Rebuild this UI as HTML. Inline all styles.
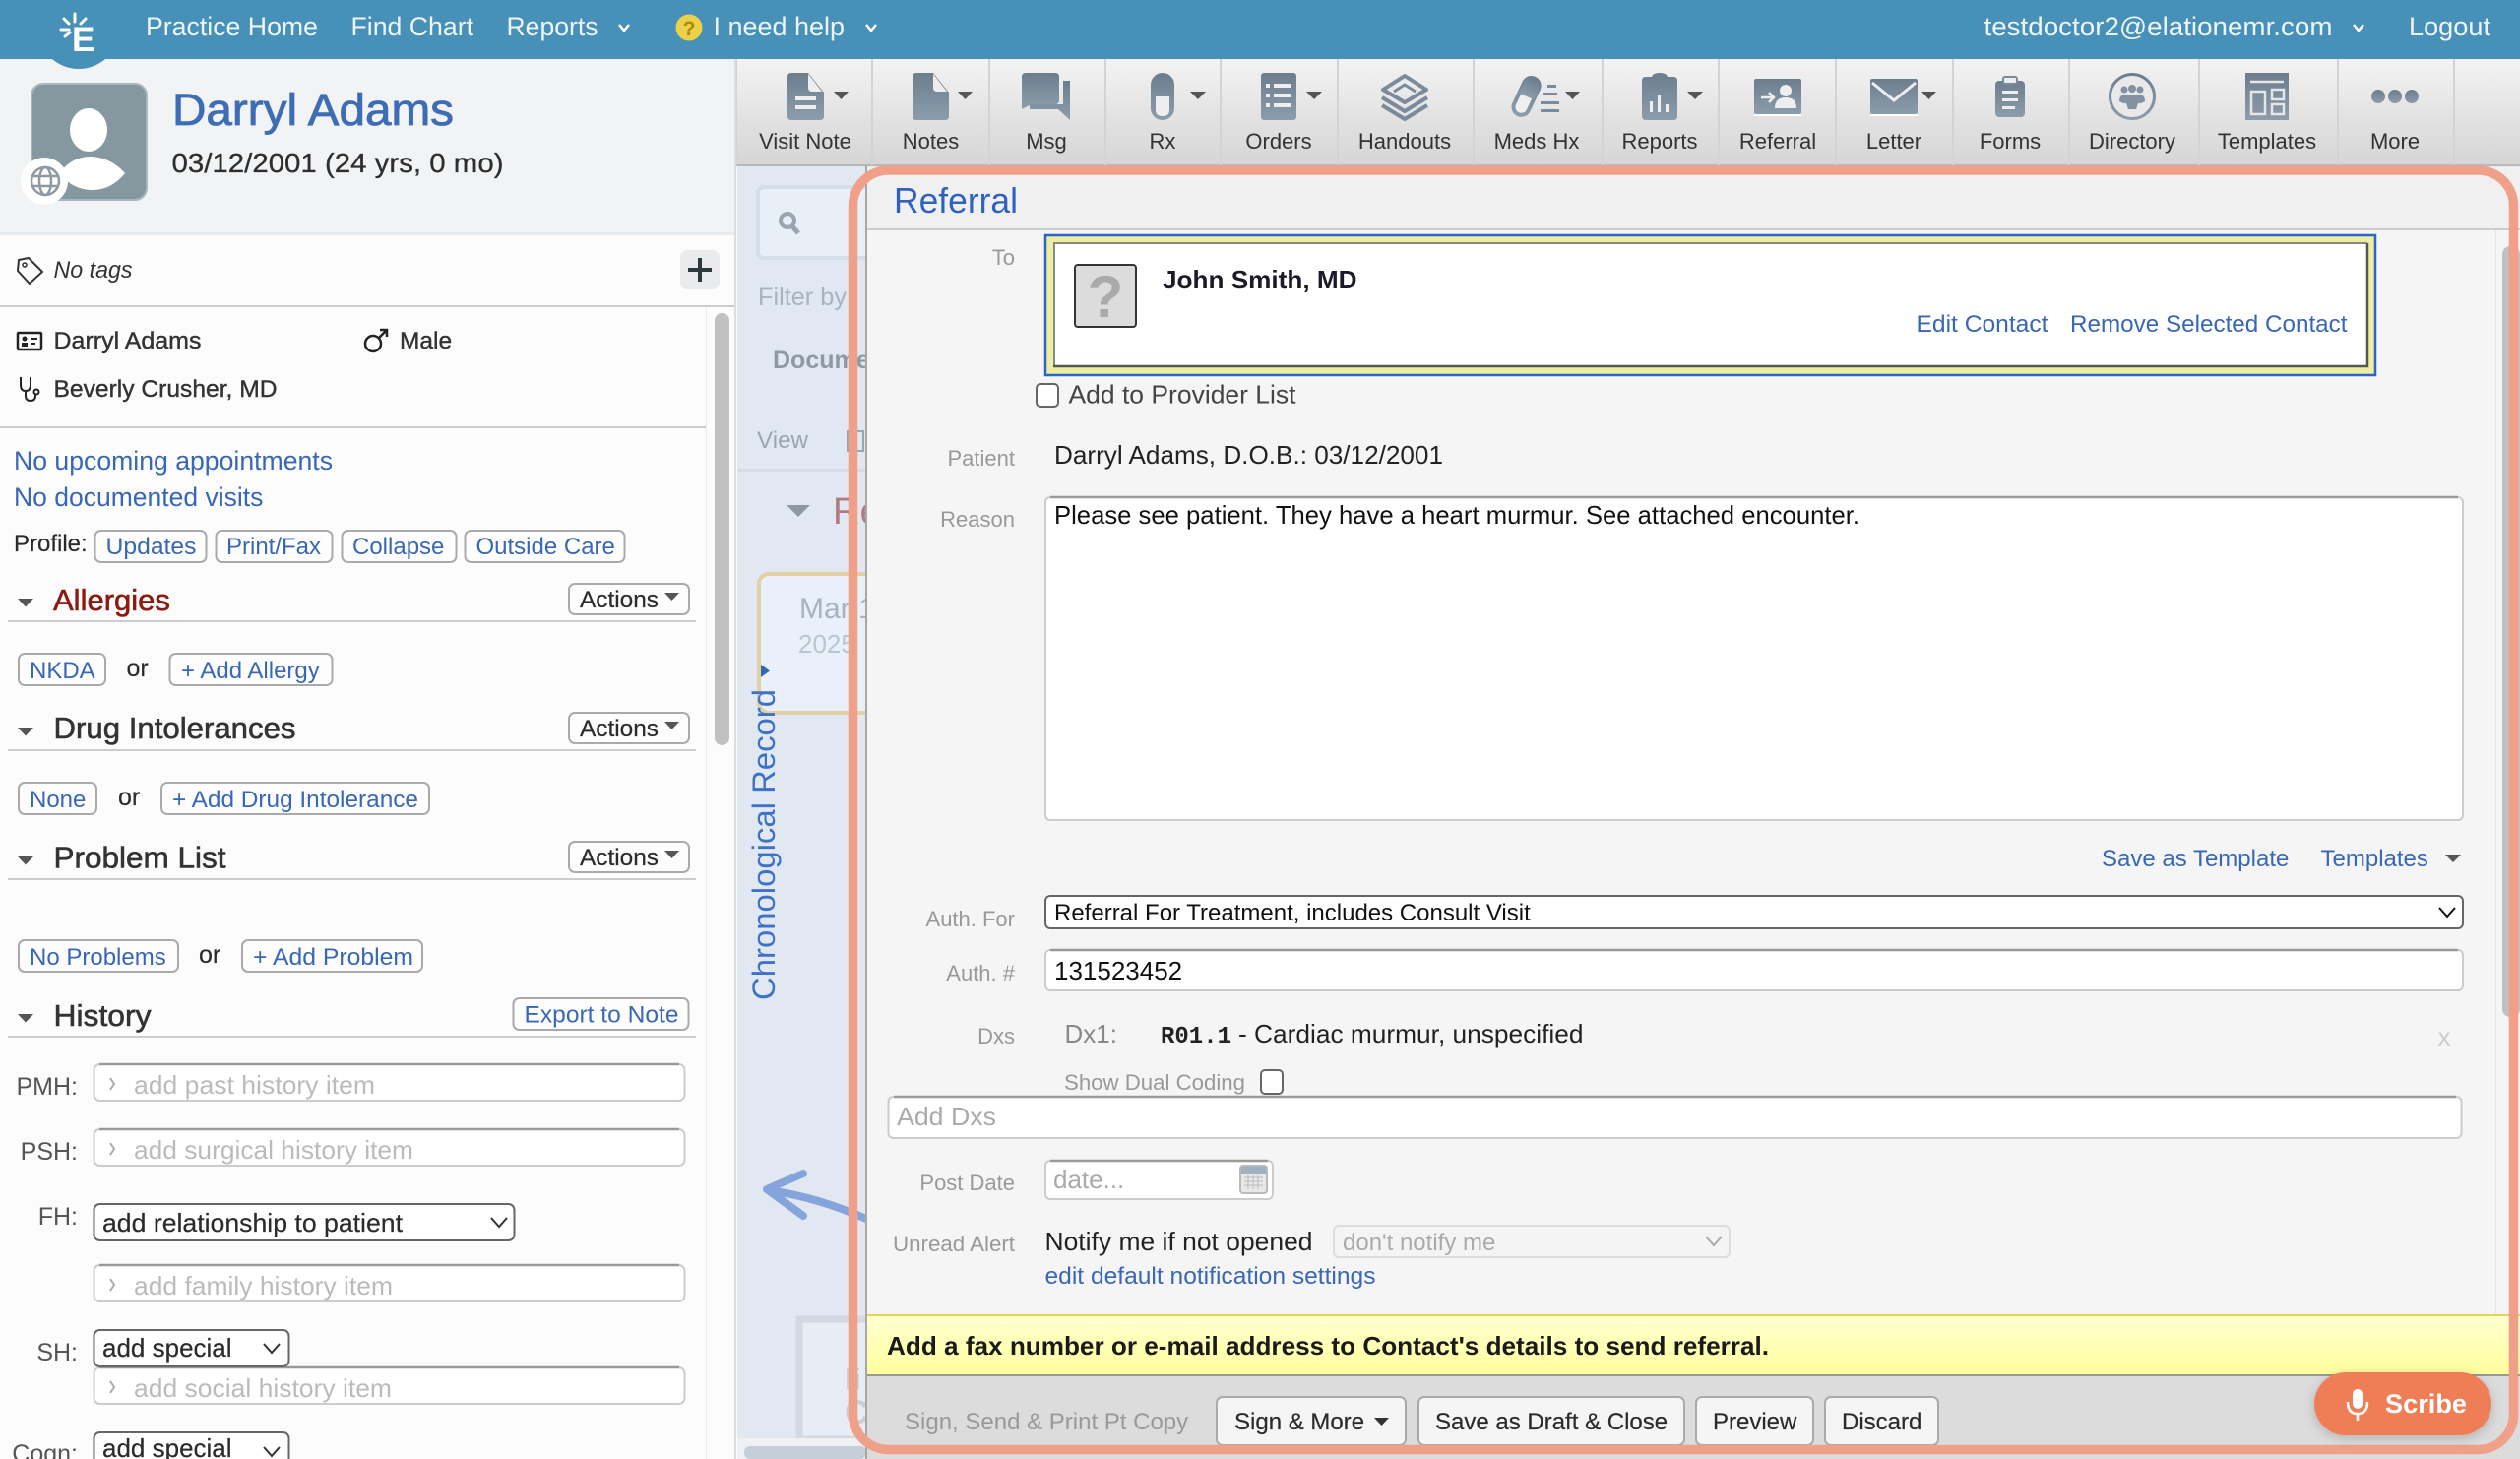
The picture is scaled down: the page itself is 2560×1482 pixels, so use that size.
<!DOCTYPE html>
<html lang="en"><head><meta charset="utf-8"><title>Referral - Darryl Adams</title>
<style>
html,body{margin:0;padding:0;width:2560px;height:1482px;overflow:hidden;background:#fcfcfc}
svg{display:block}
text{font-family:"Liberation Sans",Arial,sans-serif;white-space:pre}
.l{fill:#3767b5}.d{fill:#2b2b2b;stroke:#2b2b2b;stroke-width:.2}.g{fill:#999}.p{fill:#bbb}
.s22{font-size:22px}.s24{font-size:24px}.s26{font-size:26px}
.nav{font-size:27px;fill:#eef5f9}
.tb{font-size:22px;fill:#333;text-anchor:middle}
.h{font-size:31px;fill:#333;stroke:#333;stroke-width:.6}
.lbl{font-size:25px;fill:#555;text-anchor:end}
.mlb{font-size:22px;fill:#999;text-anchor:end}
.btn{fill:#fdfdfd;stroke:#aaa;stroke-width:2}
.inp{fill:#fff;stroke:#ccc;stroke-width:2}
.sel{fill:#fff;stroke:#666;stroke-width:2}
.top{stroke:#999;stroke-width:2.5}
.chv{fill:none;stroke:#333;stroke-width:2}
.ck{fill:#fff;stroke:#666;stroke-width:2}
</style></head><body>
<svg xmlns="http://www.w3.org/2000/svg" width="2560" height="1482" viewBox="0 0 2560 1482">
<defs>
<linearGradient id="tbg" x1="0" y1="0" x2="0" y2="1"><stop offset="0" stop-color="#f3f3f3"/><stop offset="1" stop-color="#d5d5d5"/></linearGradient>
<linearGradient id="ig" x1="0" y1="0" x2="0" y2="1"><stop offset="0" stop-color="#6c7e8e"/><stop offset="1" stop-color="#8c9cab"/></linearGradient>
<linearGradient id="yel" x1="0" y1="0" x2="0" y2="1"><stop offset="0" stop-color="#ffffd2"/><stop offset="1" stop-color="#ffff9c"/></linearGradient>
<filter id="sh" x="-20%" y="-30%" width="140%" height="170%"><feDropShadow dx="0" dy="3" stdDeviation="6" flood-color="#000" flood-opacity=".2"/></filter>
</defs>

<!-- base -->
<rect width="2560" height="1482" fill="#fcfcfc"/>

<!-- main panel behind the modal -->
<rect x="749" y="168" width="1811" height="1314" fill="#e2e8f1"/>
<rect x="770" y="190" width="130" height="72" rx="6" fill="#e9eff7" stroke="#d5dde8" stroke-width="4"/>
<circle cx="800" cy="224" r="7" fill="none" stroke="#9aa5b0" stroke-width="4"/><line x1="805" y1="230" x2="811" y2="237" stroke="#9aa5b0" stroke-width="5"/>
<text x="770" y="310" font-size="25" fill="#a9b3be" textLength="90" lengthAdjust="spacingAndGlyphs">Filter by</text>
<text x="785" y="374" font-size="25" font-weight="bold" fill="#8f99a5">Document</text>
<text x="769" y="455" font-size="24" fill="#9aa6b2" textLength="52" lengthAdjust="spacingAndGlyphs">View</text>
<path d="M861 438h16v20h-16z" fill="none" stroke="#9aa6b2" stroke-width="2"/>
<rect x="749" y="476" width="131" height="3" fill="#d6dce5"/>
<polygon points="799,513 823,513 811,525" fill="#8f99a5"/>
<text x="846" y="532" font-size="38" fill="#b07a80">Re</text>
<rect x="771" y="583" width="130" height="141" rx="10" fill="#e9f0f9" stroke="#e3cfa5" stroke-width="4"/>
<text x="812" y="628" font-size="30" fill="#a9b3be">Mar 12</text>
<text x="811" y="663" font-size="26" fill="#bcc4cc">2025</text>
<polygon points="773,675 782,681.5 773,688" fill="#2f6ba8"/>
<text transform="translate(787,1016) rotate(-90)" font-size="32" fill="#3e72c8" textLength="316" lengthAdjust="spacingAndGlyphs">Chronological Record</text>
<path d="M816 1192L779 1208L816 1235M781 1209Q830 1216 880 1238" fill="none" stroke="#86a4dc" stroke-width="8" stroke-linecap="round" stroke-linejoin="round"/>
<rect x="812" y="1340" width="80" height="122" fill="#e7edf5" stroke="#d2d9e3" stroke-width="7"/>
<text x="858" y="1411" font-size="30" font-weight="bold" fill="#c8cfd8">li</text>
<text x="858" y="1446" font-size="34" font-weight="bold" fill="#c8cfd8">C</text>
<rect x="749" y="1461" width="131" height="21" fill="#eef0f3"/>
<rect x="756" y="1469" width="124" height="13" rx="6" fill="#c5cdd8"/>

<!-- toolbar -->
<rect x="748" y="60" width="1812" height="108" fill="url(#tbg)"/>
<rect x="748" y="167" width="1812" height="2" fill="#b9b9b9"/>
<g fill="#d3d3d3">
<rect x="747" y="60" width="2" height="108"/><rect x="885" y="60" width="2" height="108"/><rect x="1004" y="60" width="2" height="108"/><rect x="1122" y="60" width="2" height="108"/><rect x="1239" y="60" width="2" height="108"/><rect x="1358" y="60" width="2" height="108"/><rect x="1496" y="60" width="2" height="108"/><rect x="1627" y="60" width="2" height="108"/><rect x="1745" y="60" width="2" height="108"/><rect x="1864" y="60" width="2" height="108"/><rect x="1983" y="60" width="2" height="108"/><rect x="2101" y="60" width="2" height="108"/><rect x="2233" y="60" width="2" height="108"/><rect x="2374" y="60" width="2" height="108"/><rect x="2492" y="60" width="2" height="108"/>
</g>
<text class="tb" x="818" y="151">Visit Note</text>
<text class="tb" x="945.5" y="151">Notes</text>
<text class="tb" x="1063" y="151">Msg</text>
<text class="tb" x="1181" y="151">Rx</text>
<text class="tb" x="1299" y="151">Orders</text>
<text class="tb" x="1427" y="151">Handouts</text>
<text class="tb" x="1561" y="151">Meds Hx</text>
<text class="tb" x="1686" y="151">Reports</text>
<text class="tb" x="1806" y="151">Referral</text>
<text class="tb" x="1924" y="151">Letter</text>
<text class="tb" x="2042" y="151">Forms</text>
<text class="tb" x="2166" y="151">Directory</text>
<text class="tb" x="2303" y="151">Templates</text>
<text class="tb" x="2433" y="151">More</text>

<!-- toolbar icons -->
<g fill="url(#ig)">
<path d="M804 74h17l16 20v24q0 4-4 4h-29q-4 0-4-4v-40q0-4 4-4z"/>
<path d="M931 74h17l16 20v24q0 4-4 4h-29q-4 0-4-4v-40q0-4 4-4z"/>
<path d="M1080 82h7v40l-12-11h-29v-5h34z"/>
<path d="M1042 74h30q4 0 4 4v24q0 4-4 4h-24l-10 5v-33q0-4 4-4z"/>
<rect x="1169" y="74" width="24" height="48" rx="12"/>
<rect x="1281" y="74" width="36" height="48" rx="3"/>
<path d="M1672 78h6q1-4 8-4t8 4h6q4 0 4 4v36q0 4-4 4h-28q-4 0-4-4v-36q0-4 4-4z"/>
<rect x="1782" y="80" width="48" height="36" rx="2"/>
<rect x="1900" y="80" width="48" height="36" rx="2"/>
<rect x="2027" y="82" width="30" height="37" rx="4"/>
<rect x="2281" y="74" width="44" height="48"/>
<circle cx="2416" cy="98" r="7"/><circle cx="2433" cy="98" r="7"/><circle cx="2450" cy="98" r="7"/>
</g>
<path d="M821 75l14 18h-10q-4 0-4-4z" fill="#eee"/>
<path d="M948 75l14 18h-10q-4 0-4-4z" fill="#eee"/>
<rect x="808" y="98" width="21" height="4" fill="#eee"/><rect x="808" y="107" width="21" height="4" fill="#eee"/>
<path d="M1174 98h14v14q0 6-7 6t-7-6z" fill="#eee"/>
<g fill="#eee">
<rect x="1286" y="85" width="4" height="4"/><rect x="1294" y="85" width="18" height="4"/>
<rect x="1286" y="95" width="4" height="4"/><rect x="1294" y="95" width="18" height="4"/>
<rect x="1286" y="105" width="4" height="4"/><rect x="1294" y="105" width="18" height="4"/>
</g>
<g fill="none" stroke="#7a8b9b" stroke-width="4" stroke-linejoin="round">
<polygon points="1427,77 1449,91 1427,104 1405,91"/>
<polyline points="1404,99 1427,113 1450,99"/>
<polyline points="1404,107 1427,121 1450,107"/>
</g>
<path d="M1416 93l11-7 11 7" fill="none" stroke="#7a8b9b" stroke-width="3"/>
<g transform="rotate(25 1551 97)"><rect x="1543" y="78" width="16" height="40" rx="8" fill="#f0f0f0" stroke="url(#ig)" stroke-width="4"/><path d="M1543 98v-12q0-8 8-8t8 8v12z" fill="url(#ig)"/></g>
<g fill="#7a8b9b"><rect x="1572" y="86" width="9" height="3"/><rect x="1567" y="94" width="15" height="3"/><rect x="1565" y="103" width="19" height="3"/><rect x="1565" y="111" width="19" height="3"/></g>
<g fill="#eee"><rect x="1676" y="103" width="3" height="11"/><rect x="1684" y="96" width="3" height="18"/><rect x="1692" y="106" width="3" height="8"/></g>
<path d="M1789 99h13m-5-5l5 5-5 5" fill="none" stroke="#eee" stroke-width="2.5"/>
<circle cx="1814" cy="92" r="6" fill="#eee"/><path d="M1803 110q0-11 11-11t11 11z" fill="#eee"/>
<rect x="1782" y="116" width="48" height="2" fill="#fff"/>
<polyline points="1902,84 1924,102 1946,84" fill="none" stroke="#eee" stroke-width="3"/>
<rect x="1900" y="116" width="48" height="2" fill="#fff"/>
<rect x="2035" y="78" width="14" height="7" rx="2" fill="#eee" stroke="#7a8b9b" stroke-width="2"/>
<g fill="#eee"><rect x="2034" y="92" width="16" height="3"/><rect x="2034" y="100" width="16" height="3"/><rect x="2034" y="108" width="13" height="3"/></g>
<circle cx="2166" cy="98" r="22.5" fill="#e9e9e9" stroke="url(#ig)" stroke-width="3"/>
<g fill="#8392a0"><circle cx="2158" cy="91" r="3.5"/><circle cx="2174" cy="91" r="3.5"/><circle cx="2166" cy="90" r="4"/><path d="M2153 103q0-7 6-7h14q6 0 6 7l-4 2h-3l-2 6h-8l-2-6h-3z"/></g>
<g fill="none" stroke="#e6e6e6" stroke-width="2.5"><rect x="2287" y="93" width="14" height="23"/><rect x="2308" y="91" width="12" height="10"/><rect x="2308" y="106" width="12" height="10"/><line x1="2286" y1="83" x2="2320" y2="83"/></g>
<g fill="#555">
<polygon points="847,93 862,93 854.5,101"/><polygon points="973,93 988,93 980.5,101"/><polygon points="1209,93 1225,93 1217,101"/><polygon points="1327,93 1343,93 1335,101"/><polygon points="1590,93 1605,93 1597.5,101"/><polygon points="1714,93 1730,93 1722,101"/><polygon points="1952,93 1967,93 1959.5,101"/>
</g>

<!-- left panel header -->
<rect y="60" width="747" height="176" fill="#f1f3f5"/>

<!-- top bar -->
<rect width="2560" height="60" fill="#4791b8"/>
<circle cx="80" cy="28.5" r="41.5" fill="#4791b8"/>
<g stroke="#fff" stroke-width="3" stroke-linecap="round"><line x1="76" y1="14" x2="76" y2="22"/><line x1="65" y1="19" x2="70" y2="24"/><line x1="87" y1="19" x2="82" y2="24"/><line x1="62" y1="30" x2="70" y2="30"/><line x1="66" y1="37" x2="71" y2="33"/></g>
<text x="73" y="52" font-size="35" font-weight="bold" fill="#fff">E</text>
<text class="nav" x="148" y="36" textLength="175" lengthAdjust="spacingAndGlyphs">Practice Home</text>
<text class="nav" x="356.5" y="36" textLength="124.5" lengthAdjust="spacingAndGlyphs">Find Chart</text>
<text class="nav" x="514.5" y="36" textLength="93" lengthAdjust="spacingAndGlyphs">Reports</text>
<polyline points="629,25 634,31 639,25" fill="none" stroke="#fff" stroke-width="2.5"/>
<circle cx="700" cy="28" r="13.5" fill="#ecd04a"/>
<text x="700" y="36" font-size="21" font-weight="bold" fill="#b08a10" text-anchor="middle">?</text>
<text class="nav" x="724.5" y="36" textLength="133.5" lengthAdjust="spacingAndGlyphs">I need help</text>
<polyline points="880,25 885,31 890,25" fill="none" stroke="#fff" stroke-width="2.5"/>
<text class="nav" x="2015.5" y="36" textLength="354" lengthAdjust="spacingAndGlyphs">testdoctor2@elationemr.com</text>
<polyline points="2391,25 2396,31 2401,25" fill="none" stroke="#fff" stroke-width="2.5"/>
<text class="nav" x="2447" y="36" textLength="83" lengthAdjust="spacingAndGlyphs">Logout</text>

<rect x="32" y="85" width="117" height="118" rx="12" fill="#86989f" stroke="#a9b8be" stroke-width="2"/>
<ellipse cx="90" cy="132" rx="19" ry="22" fill="#fff"/>
<path d="M60 176q14-18 34-17q20 2 33 17q-14 17-33 17q-20 0-34-17z" fill="#fff"/>
<circle cx="45" cy="184" r="24" fill="#fff"/>
<g fill="none" stroke="#8e9aa3" stroke-width="2.5"><circle cx="46" cy="184" r="14"/><ellipse cx="46" cy="184" rx="6" ry="14"/><line x1="32" y1="179" x2="60" y2="179"/><line x1="32" y1="189" x2="60" y2="189"/></g>
<text x="175" y="127" font-size="45" fill="#3d6db5" stroke="#3d6db5" stroke-width=".8" textLength="286" lengthAdjust="spacingAndGlyphs">Darryl Adams</text>
<text x="174.5" y="175" font-size="28" fill="#2e2e2e" stroke="#2e2e2e" stroke-width=".3" textLength="337" lengthAdjust="spacingAndGlyphs">03/12/2001 (24 yrs, 0 mo)</text>
<rect y="236" width="747" height="3" fill="#e7eaed"/>
<path d="M19 264L29 262L43 276L30 288L18 275Z" fill="none" stroke="#333" stroke-width="2"/><circle cx="25" cy="269" r="2" fill="none" stroke="#333" stroke-width="1.5"/>
<text x="54.5" y="282" font-size="24" font-style="italic" fill="#333" textLength="80" lengthAdjust="spacingAndGlyphs">No tags</text>
<rect x="691" y="254" width="40" height="40" rx="7" fill="#e9ebed"/>
<rect x="699" y="272" width="24" height="4" fill="#2e3a3e"/><rect x="709" y="262" width="4" height="24" fill="#2e3a3e"/>
<rect y="310" width="747" height="2" fill="#ccc"/>
<rect x="717" y="312" width="1" height="1170" fill="#eaeaea"/>
<rect x="726" y="318" width="15" height="439" rx="7.5" fill="#c1c1c1"/>
<rect x="746" y="60" width="2" height="1422" fill="#ddd"/>

<!-- demographics -->
<rect x="18" y="338" width="24" height="17" rx="1" fill="none" stroke="#222" stroke-width="2.5"/><circle cx="25" cy="344" r="2.5" fill="#222"/><rect x="22" y="348" width="6" height="4" fill="#222"/><rect x="31" y="343" width="7" height="2" fill="#222"/><rect x="31" y="348" width="5" height="2" fill="#222"/>
<text x="54.5" y="354" font-size="24.5" fill="#333" stroke="#333" stroke-width=".4" textLength="150" lengthAdjust="spacingAndGlyphs">Darryl Adams</text>
<circle cx="379" cy="349" r="8" fill="none" stroke="#222" stroke-width="2.5"/><path d="M385 343l8-8m-7 0h7v7" fill="none" stroke="#222" stroke-width="2.5"/>
<text x="406" y="354" font-size="24.5" fill="#333" stroke="#333" stroke-width=".4">Male</text>
<path d="M21 383v8q0 6 5 6t5-6v-8M26 397v5q0 5 5 5t5-5v-2" fill="none" stroke="#222" stroke-width="2"/><circle cx="37" cy="398" r="2.5" fill="none" stroke="#222" stroke-width="2"/>
<text x="54.5" y="403" font-size="24.5" fill="#333" stroke="#333" stroke-width=".4" textLength="227" lengthAdjust="spacingAndGlyphs">Beverly Crusher, MD</text>
<rect y="433" width="717" height="2" fill="#ccc"/>

<text class="l" x="14" y="477" font-size="26.5" textLength="324" lengthAdjust="spacingAndGlyphs">No upcoming appointments</text>
<text class="l" x="14" y="514" font-size="26.5">No documented visits</text>
<text class="d s24" x="14" y="560">Profile:</text>
<rect class="btn" x="96.5" y="539" width="113" height="32" rx="6"/><text class="l s24" x="107.5" y="563" textLength="92" lengthAdjust="spacingAndGlyphs">Updates</text>
<rect class="btn" x="219.5" y="539" width="118" height="32" rx="6"/><text class="l s24" x="230" y="563">Print/Fax</text>
<rect class="btn" x="347.5" y="539" width="116" height="32" rx="6"/><text class="l s24" x="358" y="563">Collapse</text>
<rect class="btn" x="472.5" y="539" width="162" height="32" rx="6"/><text class="l s24" x="483.5" y="563">Outside Care</text>

<!-- Allergies -->
<polygon points="18,608 34,608 26,616.5" fill="#555"/>
<text class="h" x="54" y="620" style="fill:#8b1a10;stroke:#8b1a10">Allergies</text>
<rect x="8" y="630" width="699" height="2" fill="#ccc"/>
<rect class="btn" x="578" y="593" width="122" height="31" rx="6"/><text class="d s24" x="589" y="617" textLength="80" lengthAdjust="spacingAndGlyphs">Actions</text><polygon points="675,602 690,602 682.5,610" fill="#555"/>
<rect class="btn" x="19" y="664" width="88" height="32" rx="6"/><text class="l s24" x="30" y="689">NKDA</text>
<text class="d" x="128.5" y="687" font-size="25">or</text>
<rect class="btn" x="172.5" y="664" width="165" height="32" rx="6"/><text class="l s24" x="184" y="689">+ Add Allergy</text>

<!-- Drug Intolerances -->
<polygon points="18,739 34,739 26,747.5" fill="#555"/>
<text class="h" x="54.5" y="750" textLength="246" lengthAdjust="spacingAndGlyphs">Drug Intolerances</text>
<rect x="8" y="761" width="699" height="2" fill="#ccc"/>
<rect class="btn" x="578" y="724" width="122" height="31" rx="6"/><text class="d s24" x="589" y="748" textLength="80" lengthAdjust="spacingAndGlyphs">Actions</text><polygon points="675,733 690,733 682.5,741" fill="#555"/>
<rect class="btn" x="19" y="795" width="79" height="32" rx="6"/><text class="l s24" x="30" y="820">None</text>
<text class="d" x="120" y="818" font-size="25">or</text>
<rect class="btn" x="164" y="795" width="272" height="32" rx="6"/><text class="l s24" x="175" y="820" textLength="250" lengthAdjust="spacingAndGlyphs">+ Add Drug Intolerance</text>

<!-- Problem List -->
<polygon points="18,870 34,870 26,878.5" fill="#555"/>
<text class="h" x="54.5" y="881.5" textLength="175" lengthAdjust="spacingAndGlyphs">Problem List</text>
<rect x="8" y="892" width="699" height="2" fill="#ccc"/>
<rect class="btn" x="578" y="855" width="122" height="31" rx="6"/><text class="d s24" x="589" y="879" textLength="80" lengthAdjust="spacingAndGlyphs">Actions</text><polygon points="675,864 690,864 682.5,872" fill="#555"/>
<rect class="btn" x="19" y="955" width="162" height="32" rx="6"/><text class="l s24" x="30" y="980">No Problems</text>
<text class="d" x="202" y="978" font-size="25">or</text>
<rect class="btn" x="246" y="955" width="183" height="32" rx="6"/><text class="l s24" x="257" y="980" textLength="163" lengthAdjust="spacingAndGlyphs">+ Add Problem</text>

<!-- History -->
<polygon points="18,1030 34,1030 26,1038.5" fill="#555"/>
<text class="h" x="54.5" y="1042" textLength="99" lengthAdjust="spacingAndGlyphs">History</text>
<rect x="8" y="1052" width="699" height="2" fill="#ccc"/>
<rect class="btn" x="521.5" y="1014" width="178" height="32" rx="6"/><text class="l s24" x="532.5" y="1038.5" textLength="157" lengthAdjust="spacingAndGlyphs">Export to Note</text>

<text class="lbl" x="79" y="1112">PMH:</text>
<rect class="inp" x="95.5" y="1081" width="600" height="37" rx="6"/><path d="M101 1081h589" class="top"/>
<polyline points="112,1095 116,1101 112,1107" fill="none" stroke="#aaa" stroke-width="2"/>
<text class="p s26" x="136" y="1111" textLength="245" lengthAdjust="spacingAndGlyphs">add past history item</text>
<text class="lbl" x="79" y="1178">PSH:</text>
<rect class="inp" x="95.5" y="1147" width="600" height="37" rx="6"/><path d="M101 1147h589" class="top"/>
<polyline points="112,1161 116,1167 112,1173" fill="none" stroke="#aaa" stroke-width="2"/>
<text class="p s26" x="136" y="1177" textLength="284" lengthAdjust="spacingAndGlyphs">add surgical history item</text>
<text class="lbl" x="79" y="1244">FH:</text>
<rect class="sel" x="95.5" y="1223" width="427" height="37" rx="6"/>
<text class="d s26" x="104" y="1251" textLength="305" lengthAdjust="spacingAndGlyphs">add relationship to patient</text>
<polyline class="chv" points="499,1237 507,1246 515,1237"/>
<rect class="inp" x="95.5" y="1285" width="600" height="37" rx="6"/><path d="M101 1285h589" class="top"/>
<polyline points="112,1299 116,1305 112,1311" fill="none" stroke="#aaa" stroke-width="2"/>
<text class="p s26" x="136" y="1315" textLength="263" lengthAdjust="spacingAndGlyphs">add family history item</text>
<text class="lbl" x="79" y="1382">SH:</text>
<rect class="inp" x="95.5" y="1389" width="600" height="37" rx="6"/><path d="M101 1389h589" class="top"/>
<polyline points="112,1403 116,1409 112,1415" fill="none" stroke="#aaa" stroke-width="2"/>
<text class="p s26" x="136" y="1419" textLength="262" lengthAdjust="spacingAndGlyphs">add social history item</text>
<rect class="sel" x="95.5" y="1351" width="198" height="37" rx="6"/>
<text class="d s26" x="104" y="1378">add special</text>
<polyline class="chv" points="268,1365 276,1374 284,1365"/>
<text class="lbl" x="79" y="1485">Cogn:</text>
<rect class="sel" x="95.5" y="1455" width="198" height="40" rx="6"/>
<text class="d s26" x="104" y="1480">add special</text>
<polyline class="chv" points="268,1470 276,1479 284,1470"/>

<!-- modal -->
<rect x="880" y="170" width="1680" height="1312" fill="#f5f5f5"/>
<rect x="879" y="168" width="2" height="1314" fill="#a8a8a8"/>
<rect x="881" y="170" width="1679" height="62" fill="#f0f0f0"/>
<rect x="881" y="232" width="1679" height="2" fill="#ccc"/>
<rect x="2535" y="234" width="1" height="1101" fill="#e4e4e4"/>
<rect x="2542" y="250" width="18" height="783" rx="8" fill="#c1c1c1"/>
<text x="908" y="216" font-size="36" fill="#2f62c0" textLength="126" lengthAdjust="spacingAndGlyphs">Referral</text>

<text class="mlb" x="1031" y="269">To</text>
<rect x="1062" y="239" width="1351" height="142" fill="#eeeea0" stroke="#2a62d0" stroke-width="2.5"/>
<rect x="1071" y="247" width="1334" height="125" fill="#fff"/>
<path d="M1071 373V247H2405" fill="none" stroke="#888" stroke-width="2"/><path d="M2405 247V372H1070" fill="none" stroke="#555" stroke-width="2.5"/>
<rect x="1092" y="269" width="62" height="63" rx="3" fill="#dcdcdc" stroke="#333" stroke-width="2"/>
<text x="1123" y="322" font-size="60" font-weight="bold" fill="#aaa" text-anchor="middle">?</text>
<text x="1181" y="293" font-size="26" font-weight="bold" fill="#1a1a2a" textLength="197.5" lengthAdjust="spacingAndGlyphs">John Smith, MD</text>
<text class="l s24" x="1946.5" y="337" textLength="134" lengthAdjust="spacingAndGlyphs">Edit Contact</text>
<text class="l s24" x="2103" y="337" textLength="281.5" lengthAdjust="spacingAndGlyphs">Remove Selected Contact</text>

<rect class="ck" x="1053" y="390" width="22" height="23" rx="4"/>
<text x="1085.5" y="409.5" font-size="26" fill="#444" textLength="231" lengthAdjust="spacingAndGlyphs">Add to Provider List</text>

<text class="mlb" x="1031" y="473">Patient</text>
<text x="1071" y="471" font-size="26" fill="#222" textLength="395" lengthAdjust="spacingAndGlyphs">Darryl Adams, D.O.B.: 03/12/2001</text>

<text class="mlb" x="1031" y="535">Reason</text>
<rect class="inp" x="1062" y="505" width="1440" height="328" rx="5"/><path d="M1067 505h1430" class="top"/>
<text x="1071" y="532" font-size="26" fill="#111" textLength="818" lengthAdjust="spacingAndGlyphs">Please see patient. They have a heart murmur. See attached encounter.</text>

<text class="l s24" x="2135" y="880">Save as Template</text>
<text class="l s24" x="2357.5" y="880">Templates</text>
<polygon points="2484,868 2500,868 2492,876" fill="#555"/>

<text class="mlb" x="1031" y="941">Auth. For</text>
<rect class="sel" x="1062" y="910" width="1440" height="33" rx="5"/>
<text x="1071" y="935" font-size="24" fill="#111">Referral For Treatment, includes Consult Visit</text>
<polyline class="chv" points="2478,922 2486,931 2494,922" style="stroke:#111"/>

<text class="mlb" x="1031" y="996">Auth. #</text>
<rect class="inp" x="1062" y="965" width="1440" height="41" rx="5"/><path d="M1067 965h1430" class="top"/>
<text x="1071" y="995" font-size="26" fill="#111">131523452</text>

<text class="mlb" x="1031" y="1060">Dxs</text>
<text x="1081.5" y="1059" font-size="26" fill="#888">Dx1:</text>
<text x="1179" y="1059" font-size="24" font-weight="bold" fill="#222" style="font-family:'Liberation Mono',monospace">R01.1</text>
<text x="1258" y="1059" font-size="26" fill="#222" textLength="350.5" lengthAdjust="spacingAndGlyphs">- Cardiac murmur, unspecified</text>
<text x="2483" y="1062" font-size="26" fill="#ccc" text-anchor="middle">x</text>
<text x="1081" y="1107" font-size="22.5" fill="#999" textLength="184" lengthAdjust="spacingAndGlyphs">Show Dual Coding</text>
<rect class="ck" x="1281" y="1087" width="22" height="24" rx="4"/>

<rect class="inp" x="902.5" y="1114" width="1598" height="42" rx="5"/><path d="M908 1114h1587" class="top"/>
<text x="911" y="1143" font-size="26" fill="#aaa" textLength="101" lengthAdjust="spacingAndGlyphs">Add Dxs</text>

<text class="mlb" x="1031" y="1209">Post Date</text>
<rect class="inp" x="1062" y="1179" width="231" height="39" rx="5"/><path d="M1067 1179h221" class="top"/>
<text x="1070" y="1207" font-size="26" fill="#aaa">date...</text>
<rect x="1260" y="1184" width="27" height="28" rx="3" fill="#e8e8e8" stroke="#bbb" stroke-width="2"/>
<rect x="1261" y="1185" width="25" height="7" fill="#9eb0c2"/>
<path d="M1264 1196h19M1264 1200h19M1264 1204h19M1268 1194v14M1273 1194v14M1278 1194v14" stroke="#bbb" stroke-width="1" fill="none"/>

<text class="mlb" x="1031" y="1271" textLength="124" lengthAdjust="spacingAndGlyphs" style="text-anchor:end">Unread Alert</text>
<text x="1061.5" y="1270" font-size="26" fill="#222" textLength="272" lengthAdjust="spacingAndGlyphs">Notify me if not opened</text>
<rect x="1355" y="1245" width="402" height="32" rx="5" fill="#f4f4f4" stroke="#ddd" stroke-width="2"/>
<text x="1364" y="1270" font-size="24" fill="#aaa">don't notify me</text>
<polyline points="1733,1256 1741,1265 1749,1256" fill="none" stroke="#aaa" stroke-width="2"/>
<text class="l s24" x="1061.5" y="1304" textLength="336" lengthAdjust="spacingAndGlyphs">edit default notification settings</text>

<!-- yellow bar -->
<rect x="881" y="1335" width="1679" height="62" fill="url(#yel)"/>
<rect x="881" y="1335" width="1679" height="2" fill="#e3d555"/>
<rect x="881" y="1396" width="1679" height="2" fill="#999"/>
<text x="901" y="1376" font-size="26" font-weight="bold" fill="#1a1a1a" textLength="896" lengthAdjust="spacingAndGlyphs">Add a fax number or e-mail address to Contact's details to send referral.</text>

<!-- footer -->
<rect x="881" y="1398" width="1679" height="84" fill="#dcdcdc"/>
<text x="919" y="1452" font-size="24" fill="#999">Sign, Send &amp; Print Pt Copy</text>
<g fill="#f5f5f5" stroke="#aaa" stroke-width="2">
<rect x="1236" y="1419" width="192" height="49" rx="6"/>
<rect x="1441" y="1419" width="270" height="49" rx="6"/>
<rect x="1723" y="1419" width="119" height="49" rx="6"/>
<rect x="1854" y="1419" width="115" height="49" rx="6"/>
</g>
<text class="d s24" x="1254" y="1452">Sign &amp; More</text><polygon points="1396,1440 1411,1440 1403.5,1448" fill="#333"/>
<text class="d s24" x="1458" y="1452">Save as Draft &amp; Close</text>
<text class="d s24" x="1740" y="1452">Preview</text>
<text class="d s24" x="1871" y="1452">Discard</text>

<!-- coral outline -->
<rect x="866.5" y="173" width="1687" height="1299.5" rx="36" fill="none" stroke="#f0a088" stroke-width="9.5"/>

<!-- scribe -->
<rect x="2351" y="1394" width="180" height="64" rx="32" fill="#ef7d57" filter="url(#sh)"/>
<rect x="2390" y="1411" width="10" height="20" rx="5" fill="#fff"/>
<path d="M2385 1424q0 12 10 12t10-12M2395 1436v7" fill="none" stroke="#fff" stroke-width="2.5"/>
<text x="2423" y="1435" font-size="27" font-weight="bold" fill="#fff" textLength="83" lengthAdjust="spacingAndGlyphs">Scribe</text>
</svg>
</body></html>
